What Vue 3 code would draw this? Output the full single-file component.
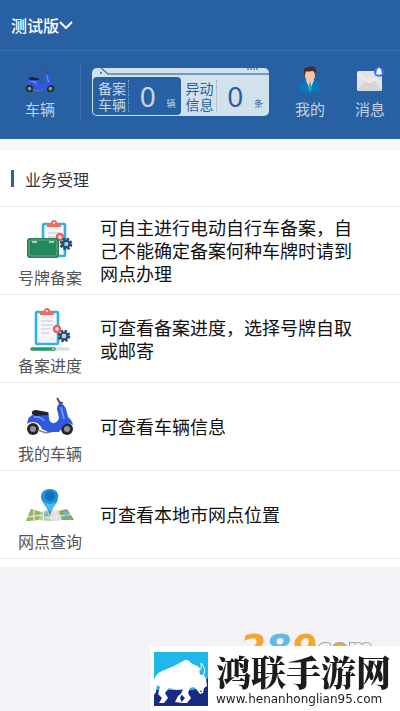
<template>
  <div class="page">
    <header class="header">
      <div class="header__top">
        <button class="version" type="button">
          测试版
          <svg class="version__arrow" viewBox="0 0 14 8">
            <path d="M1 1 L7 7 L13 1" fill="none" stroke="#fff" stroke-width="2" />
          </svg>
        </button>
      </div>

      <nav class="nav">
        <a href="#" class="nav__item nav__item_first">
          <span class="nav__icon">
            <svg width="32" height="26" viewBox="0 0 52 42">
              <use href="#scooter" />
            </svg>
          </span>
          车辆
        </a>

        <div class="nav__center">
          <div class="plate">
            <svg class="plate__line" viewBox="0 0 177 9" preserveAspectRatio="none">
              <path d="M9 0 L16 6 H177" fill="none" stroke="#5680ae" stroke-width="1.6" />
              <circle cx="9" cy="5" r="1" fill="#2b5f9a" />
              <path d="M155 1 H167" stroke="#5680ae" stroke-width="1.5" stroke-dasharray="2 1" />
            </svg>
            <div
              class="plate__part"
              v-for="item in counters"
              :key="item.unit"
              :class="{ plate__part_dark: item.dark }"
            >
              <p class="plate__name">{{ item.top }}<br />{{ item.bottom }}</p>
              <p class="plate__count">{{ item.count }}</p>
              <p class="plate__unit">{{ item.unit }}</p>
            </div>
          </div>
        </div>

        <a href="#" class="nav__item">
          <span class="nav__icon">
            <svg width="22" height="28" viewBox="0 0 22 28">
              <path d="M1 25 Q0 16 7 14 H15 Q22 16 21 25 Q17 28 11 28 Q5 28 1 25Z" fill="#0d75b8" />
              <path d="M7 14 L11 24 L15 14Z" fill="#e9f3f6" />
              <path d="M10 17 H12 L13 23 L11 26 L9 23Z" fill="#23a7b5" />
              <path d="M8 11 H14 V15 L11 18 L8 15Z" fill="#dca987" />
              <ellipse cx="11" cy="9" rx="5" ry="7" fill="#f3c8a9" />
              <path d="M5 9 Q3 1 10 1 Q18 -1 17 6 L16 9 Q16 5 13 5 Q8 6 7 5 Q6 6 6 9Z" fill="#4b2d24" />
            </svg>
          </span>
          我的
        </a>
        <a href="#" class="nav__item">
          <span class="nav__icon">
            <svg width="28" height="28" viewBox="0 0 28 28">
              <rect x="1" y="5" width="25" height="20" rx="2" fill="#e4e5e7" />
              <path d="M1 24 L10 14 L13 16 L17 14 L26 24 Q26 25 24 25 H3 Q1 25 1 24Z" fill="#d3d5d8" />
              <path d="M1 7 L12 16 Q13 17 15 16 L26 7" fill="none" stroke="#f1f1f2" stroke-width="1.2" />
              <circle cx="23" cy="6" r="5" fill="#3c6df0" />
              <path d="M20 8 Q21 7 21 5 Q21 3 23 2 Q25 3 25 5 Q25 7 26 8Z M22 9 H24" fill="#fff" stroke="#fff" stroke-width="0.6" />
            </svg>
          </span>
          消息
        </a>
      </nav>
    </header>

    <main class="main">
      <h2 class="title">业务受理</h2>
      <ul class="services">
        <li v-for="item in services" :key="item.icon">
          <a href="#" class="service">
            <span class="service__left">
              <span class="service__icon">
                <svg width="52" height="46" viewBox="0 0 52 46">
                  <use :href="'#' + item.icon" />
                </svg>
              </span>
              <span class="service__name">{{ item.name }}</span>
            </span>
            <span class="service__text">{{ item.text }}</span>
          </a>
        </li>
      </ul>
    </main>

    <div class="brand">
      <div class="brand__behind">
        <span class="brand__num">289</span>
        <span class="brand__com">c<i>o</i>m</span>
      </div>
      <div class="brand__box">
        <svg class="brand__logo" viewBox="0 0 54 54">
          <rect width="54" height="54" fill="#20b7ea" />
          <path d="M0 38 H40 L54 26 V54 H0Z" fill="#182b83" />
          <path
            d="M0 29 Q1 22 8 19 L20 14 L31 8 Q34 7 37 11 L45 15 L49 21 L52 27 L53 34 L50 36 L49 41 L46 42 L43 38 L40 35 L36 36 L34 41 L37 46 L33 51 H27 L31 46 L27 42 L29 37 L22 38 L15 36 L11 41 L14 46 L10 51 H5 L8 46 L4 42 L6 35 L3 33 L2 40 L0 43Z"
            fill="#fff"
          />
          <path d="M47 11 Q52 16 50 22 L47 24 Q44 21 45 18 Q48 18 47 11Z" fill="#20b7ea" stroke="#fff" stroke-width="1" />
          <path d="M46 39 L48 40" stroke="#182b83" stroke-width="1" />
          <path d="M21 50 L24 44 L29 40 L26 46 L28 51Z" fill="#fff" />
        </svg>
        <div class="brand__info">
          <p class="brand__name">鸿联手游网</p>
          <p class="brand__url">www.henanhonglian95.com</p>
        </div>
      </div>
    </div>

    <!-- общие иконки -->
    <svg class="sprite" width="0" height="0">
      <defs>
        <g id="gear">
          <circle r="5" fill="none" stroke="#2b4a6b" stroke-width="2.6" stroke-dasharray="2.4 1.53" />
          <circle r="3.4" fill="none" stroke="#2b4a6b" stroke-width="2.4" />
          <circle r="1.6" fill="#8fc4e4" />
        </g>
        <g id="board">
          <rect x="1" y="4" width="22" height="32" rx="1" fill="#f5f5fa" stroke="#2fb2ea" stroke-width="2.6" />
          <path d="M5 6 Q5 3 9 3 Q9 0 12 0 Q15 0 15 3 Q19 3 19 7 H5Z" fill="#f0685f" />
          <circle cx="12" cy="3" r="1" fill="#fff" />
          <path d="M6 13 H18 M6 17 H18 M6 21 H16 M6 25 H14" stroke="#d6d7e3" stroke-width="1.3" />
        </g>
        <g id="scooter">
          <circle cx="9" cy="35" r="6" fill="#26282e" />
          <circle cx="9" cy="35" r="3" fill="#8e929b" />
          <circle cx="43" cy="35" r="6" fill="#26282e" />
          <circle cx="43" cy="35" r="3" fill="#8e929b" />
          <path d="M14 36 L22 39 L30 37" fill="none" stroke="#85878f" stroke-width="1.6" />
          <path d="M3 30 Q4 22 10 20 L25 21 Q24 26 28 29 Q33 30 35 24 L33 15 Q33 11 36 9 Q40 10 42 15 L44 23 Q48 26 49 31 Q43 27 39 32 L35 38 H24 L18 35 Q15 28 9 28 Q5 28 3 30Z" fill="#3158e0" />
          <path d="M10 23 Q17 22 20 27 M37 13 L40 25" fill="none" stroke="#6f98fa" stroke-width="1.8" />
          <path d="M8 20 Q7 16 12 16 L23 18 Q26 19 24 21 L12 22Z" fill="#22242c" />
          <path d="M37 11 L34 6 M33 4 L35 7 M35 8 L39 9" fill="none" stroke="#4b4d57" stroke-width="1.8" />
        </g>
        <g id="apply">
          <g transform="translate(18 2)">
            <use href="#board" />
          </g>
          <circle cx="36" cy="19" r="3" fill="#fff" stroke="#ec6157" stroke-width="2.4" />
          <use href="#gear" x="42" y="26" />
          <rect x="3" y="20" width="32" height="20" rx="3" fill="#2a7c59" />
          <rect x="5" y="22" width="28" height="16" rx="2" fill="#23895c" stroke="#7cb999" stroke-width="0.8" />
          <path d="M8 24 H13 M25 24 H30" stroke="#d5ecdf" stroke-width="1.4" />
        </g>
        <g id="progress">
          <g transform="translate(11 2)">
            <use href="#board" />
          </g>
          <circle cx="33" cy="23" r="3" fill="#fff" stroke="#ec6157" stroke-width="2.6" />
          <use href="#gear" x="40" y="30" />
          <path d="M8 43 H44" stroke="#dcdfe5" stroke-width="3.4" stroke-linecap="round" />
          <path d="M8 43 H30" stroke="#2f9867" stroke-width="3.4" stroke-linecap="round" />
          <circle cx="29" cy="43" r="1" fill="#bfe5d3" />
        </g>
        <g id="map">
          <path d="M7 27 L17 30 L26 27 L35 29 L43 27 L50 38 L38 38 L26 39 L14 38 L2 39Z" fill="#bccb9f" />
          <path d="M7 27 L17 30 L14 38 L2 39Z" fill="#8fb568" />
          <path d="M26 27 L35 29 L38 38 L26 39Z" fill="#d9dfe0" />
          <path d="M43 27 L50 38 L38 38 L35 29Z" fill="#86aa6c" />
          <path d="M4 35 L16 33 L25 36 L48 32 M20 29 L19 38 M31 28 L33 38 M10 28 L10 38" fill="none" stroke="#f2f0dc" stroke-width="1.2" />
          <path d="M20 31 L24 30 V34 L20 35Z M40 30 H43 L45 34 L41 35Z" fill="#72b9db" />
          <path d="M26 34 Q25 28 20 22 Q15 16 18 11 Q20 7 26 7 Q32 7 34 12 Q35 18 31 23 Q27 28 26 34Z" fill="#1f91d5" />
          <circle cx="26" cy="14" r="5" fill="#0b72bb" />
          <path d="M18 19 Q26 25 34 19 Q30 24 26 30 Q23 24 18 19Z" fill="#4fb9ed" />
        </g>
      </defs>
    </svg>
  </div>
</template>

<script setup>
const counters = [
  { top: "备案", bottom: "车辆", count: 0, unit: "辆", dark: true },
  { top: "异动", bottom: "信息", count: 0, unit: "条", dark: false },
];

const services = [
  {
    icon: "apply",
    name: "号牌备案",
    text: "可自主进行电动自行车备案，自己不能确定备案何种车牌时请到网点办理",
  },
  {
    icon: "progress",
    name: "备案进度",
    text: "可查看备案进度，选择号牌自取或邮寄",
  },
  {
    icon: "scooter",
    name: "我的车辆",
    text: "可查看车辆信息",
  },
  {
    icon: "map",
    name: "网点查询",
    text: "可查看本地市网点位置",
  },
];
</script>

<style>
body {
  margin: 0;
  background: #f2f2f7;
}
</style>

<style scoped>
.page {
  min-height: 100vh;
  font-family: "Noto Sans CJK SC", "Noto Sans", sans-serif;
  background: #f2f2f7;
}
p,
h2,
ul {
  margin: 0;
  padding: 0;
}
a {
  color: inherit;
  text-decoration: none;
}
.header {
  background: #2761a3;
}
.header__top {
  display: flex;
  align-items: center;
  height: 50px;
  padding: 0 11px;
  border-bottom: 1px solid #3b71ad;
}
.version {
  display: flex;
  align-items: center;
  padding: 0;
  border: 0;
  background: none;
  color: #fff;
  font-family: inherit;
  font-size: 16px;
  font-weight: 500;
  line-height: 24px;
}
.version__arrow {
  width: 14px;
  height: 8px;
}
.nav {
  display: flex;
  align-items: center;
  box-sizing: border-box;
  height: 88px;
  padding-bottom: 6px;
}
.nav__item {
  display: flex;
  flex-direction: column;
  align-items: center;
  width: 60px;
  color: #c3d1e2;
  font-size: 15px;
  line-height: 24px;
}
.nav__item_first {
  width: 80px;
  border-right: 1px solid #3b6eab;
}
.nav__icon {
  display: flex;
  align-items: center;
  height: 34px;
}
.nav__center {
  flex: 1;
  padding: 0 11px;
}
.plate {
  position: relative;
  display: grid;
  grid-template-columns: 1fr 1fr;
  box-sizing: border-box;
  height: 48px;
  padding: 9px 1px 1px;
  border-radius: 5px;
  background: #d2e2ed;
}
.plate__line {
  position: absolute;
  top: 0;
  left: 0;
  width: 100%;
  height: 9px;
}
.plate__part {
  display: flex;
  align-items: center;
  padding: 0 5px;
  border-radius: 4px;
  color: #2b5f9a;
}
.plate__part_dark {
  background: #2761a3;
  color: #c8d6e4;
}
.plate__name {
  padding-right: 2px;
  border-right: 1px dotted #8faccb;
  font-size: 14px;
  line-height: 16px;
}
.plate__count {
  flex: 1;
  text-align: center;
  font-family: "Noto Sans", sans-serif;
  font-size: 28px;
  line-height: 36px;
}
.plate__unit {
  align-self: flex-end;
  padding-bottom: 4px;
  font-size: 9px;
  line-height: 14px;
}
.main {
  margin-top: 1px;
  padding-bottom: 8px;
  border-top: 11px solid #f7f7f9;
  background: #fff;
}
.title {
  display: flex;
  align-items: center;
  gap: 11px;
  height: 56px;
  padding: 0 11px;
  border-bottom: 1px solid #ececee;
  box-sizing: border-box;
  color: #333;
  font-size: 16px;
  font-weight: 400;
}
.title::before {
  content: "";
  width: 3px;
  height: 17px;
  background: #2761a3;
}
.services {
  list-style: none;
}
.service {
  display: flex;
  align-items: center;
  box-sizing: border-box;
  min-height: 88px;
  border-bottom: 1px solid #ececee;
}
.service__left {
  display: flex;
  flex-direction: column;
  align-items: center;
  width: 100px;
  padding-top: 4px;
}
.service__icon {
  display: flex;
  height: 48px;
  align-items: center;
}
.service__name {
  color: #555;
  font-size: 16px;
  line-height: 24px;
}
.service__text {
  flex: 1;
  padding-right: 40px;
  color: #111;
  font-size: 18px;
  line-height: 23px;
}
.brand {
  position: fixed;
  right: 0;
  bottom: 0;
  width: 250px;
}
/* нижняя часть логотипа уходит под плашку */
.brand__behind {
  position: absolute;
  top: -18px;
  left: 90px;
  display: flex;
  align-items: center;
  font-family: "DejaVu Sans", sans-serif;
  font-weight: 700;
  line-height: 42px;
}
.brand__num {
  background: linear-gradient(90deg, #f5a42d 34%, #62b9e8 34%, #62b9e8 65%, #f5a42d 65%);
  background-clip: text;
  -webkit-text-fill-color: transparent;
  font-size: 37px;
  font-style: italic;
}
.brand__com {
  color: #f2f2f7;
  font-size: 24px;
  -webkit-text-stroke: 2px #a3a3a3;
  paint-order: stroke;
}
.brand__com i {
  color: #f5a42d;
  font-style: normal;
}
.brand__box {
  position: relative;
  display: flex;
  align-items: center;
  gap: 8px;
  height: 65px;
  padding-left: 4px;
  background: #fff;
}
.brand__logo {
  flex-shrink: 0;
  width: 54px;
  height: 54px;
}
.brand__name {
  color: #1c1c1c;
  font-family: "Noto Serif CJK SC", "Noto Sans CJK SC", serif;
  font-size: 35px;
  font-weight: 900;
  line-height: 40px;
}
.brand__url {
  color: #222;
  font-family: "DejaVu Sans", sans-serif;
  font-size: 12px;
  line-height: 16px;
}
.sprite {
  position: absolute;
}
</style>
